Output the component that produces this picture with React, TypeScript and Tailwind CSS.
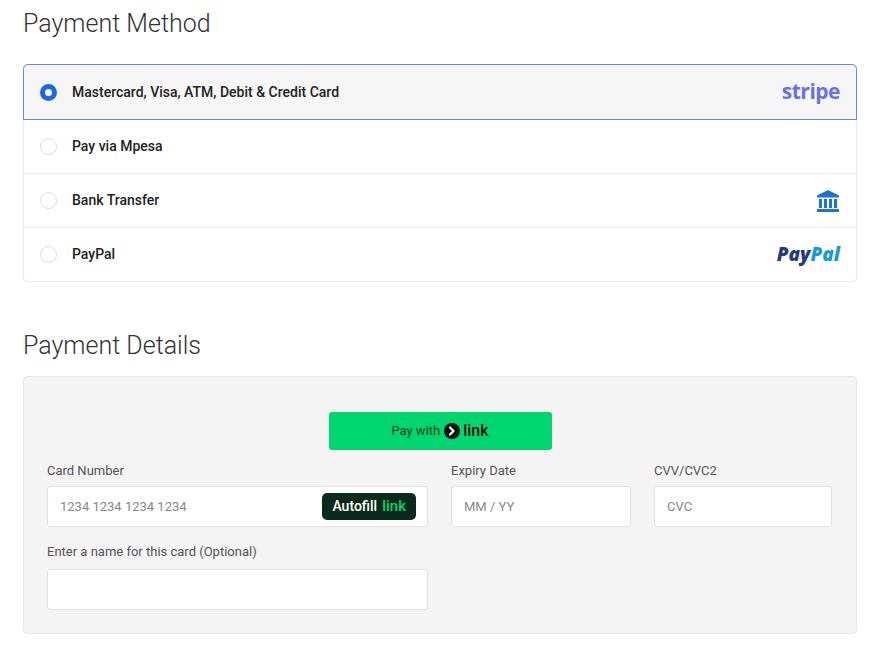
import React from "react";

const font = { fontFamily: "Roboto, 'Liberation Sans', sans-serif" };

function Radio({ checked }: { checked?: boolean }) {
  return checked ? (
    <span className="w-[17px] h-[17px] rounded-full bg-[#1a66f0] flex items-center justify-center">
      <span className="w-[7px] h-[7px] rounded-full bg-white" />
    </span>
  ) : (
    <span className="w-[17px] h-[17px] rounded-full border border-[#dcdcdc] bg-white" />
  );
}

function BankIcon() {
  return (
    <svg width="24" height="24" viewBox="0 0 24 24" fill="#1a73d9">
      <path d="M12 1 L23 6.5 V8.5 H1 V6.5 Z" />
      <rect x="3" y="10" width="3" height="9" />
      <rect x="8" y="10" width="3" height="9" />
      <rect x="13" y="10" width="3" height="9" />
      <rect x="18" y="10" width="3" height="9" />
      <rect x="1" y="20" width="22" height="3" />
    </svg>
  );
}

function LinkMark({ size = 16 }: { size?: number }) {
  return (
    <svg width={size} height={size} viewBox="0 0 16 16">
      <circle cx="8" cy="8" r="8" fill="#111" />
      <path d="M6 4.5 L9.5 8 L6 11.5" stroke="#fff" strokeWidth="2.2" fill="none" strokeLinecap="round" strokeLinejoin="round" />
    </svg>
  );
}

const methods = [
  { label: "Mastercard, Visa, ATM, Debit & Credit Card", logo: "stripe", checked: true },
  { label: "Pay via Mpesa", logo: "" },
  { label: "Bank Transfer", logo: "bank" },
  { label: "PayPal", logo: "paypal" },
];

export default function App() {
  return (
    <div className="bg-white w-[877px] h-[647px] px-[23px] pt-[8px] text-[#222]" style={font}>
      <h2 className="text-[25px] font-light text-[#333] leading-[32px] mb-[24px]">Payment Method</h2>

      <div className="w-[834px] border border-[#e8e8e8] rounded-[4px]">
        {methods.map((m, i) => (
          <div
            key={m.label}
            className={`h-[54px] flex items-center px-[16px] ${
              m.checked
                ? "bg-[#f6f6f7] outline outline-1 outline-[#5b8de6] rounded-t-[4px] relative"
                : i > 0 ? "border-t border-[#ececec]" : ""
            }`}
          >
            <Radio checked={m.checked} />
            <span className="ml-[15px] text-[14px] font-medium text-[#222] flex-1">{m.label}</span>
            {m.logo === "stripe" && (
              <span className="text-[21px] font-bold text-[#6772e5] tracking-[-0.5px]" style={{ fontFamily: "'Open Sans', sans-serif" }}>stripe</span>
            )}
            {m.logo === "bank" && <BankIcon />}
            {m.logo === "paypal" && (
              <span className="text-[19px] font-extrabold italic" style={{ fontFamily: "'Open Sans', 'Liberation Sans', sans-serif" }}>
                <span className="text-[#253b80]">Pay</span>
                <span className="text-[#179bd7]">Pal</span>
              </span>
            )}
          </div>
        ))}
      </div>

      <h2 className="text-[25px] font-light text-[#333] leading-[32px] mt-[48px] mb-[14px]">Payment Details</h2>

      <div className="w-[834px] h-[258px] bg-[#f4f4f4] border border-[#e6e6e6] rounded-[4px] px-[23px] pt-[35px]">
        <div className="flex justify-center">
          <div className="w-[223px] h-[38px] bg-[#00d66f] rounded-[3px] flex items-center justify-center gap-[4px] text-[13px] text-[#1d3a26]">
            <span>Pay with</span>
            <LinkMark />
            <span className="text-[16px] font-medium text-[#111] -ml-[1px]">link</span>
          </div>
        </div>

        <div className="flex gap-[23px] mt-[11px]">
          <div className="w-[381px]">
            <div className="text-[13px] text-[#555] h-[25px]">Card Number</div>
            <div className="h-[41px] bg-white border border-[#e2e2e2] rounded-[3px] flex items-center pl-[12px] pr-[11px]">
              <span className="text-[13px] text-[#888] flex-1">1234 1234 1234 1234</span>
              <span className="bg-[#0a2a1b] rounded-[5px] h-[27px] px-[10px] flex items-center gap-[5px] text-[14px]">
                <span className="text-white font-medium">Autofill</span>
                <span className="text-[#00d66f] font-medium text-[15px]">link</span>
              </span>
            </div>
          </div>
          <div className="w-[180px]">
            <div className="text-[13px] text-[#555] h-[25px]">Expiry Date</div>
            <div className="h-[41px] bg-white border border-[#e2e2e2] rounded-[3px] flex items-center px-[12px] text-[13px] text-[#888]">MM / YY</div>
          </div>
          <div className="w-[178px]">
            <div className="text-[13px] text-[#555] h-[25px]">CVV/CVC2</div>
            <div className="h-[41px] bg-white border border-[#e2e2e2] rounded-[3px] flex items-center px-[12px] text-[13px] text-[#888]">CVC</div>
          </div>
        </div>

        <div className="w-[381px] mt-[15px]">
          <div className="text-[13px] text-[#555] h-[27px]">Enter a name for this card (Optional)</div>
          <div className="h-[41px] bg-white border border-[#e2e2e2] rounded-[3px]" />
        </div>
      </div>
    </div>
  );
}
